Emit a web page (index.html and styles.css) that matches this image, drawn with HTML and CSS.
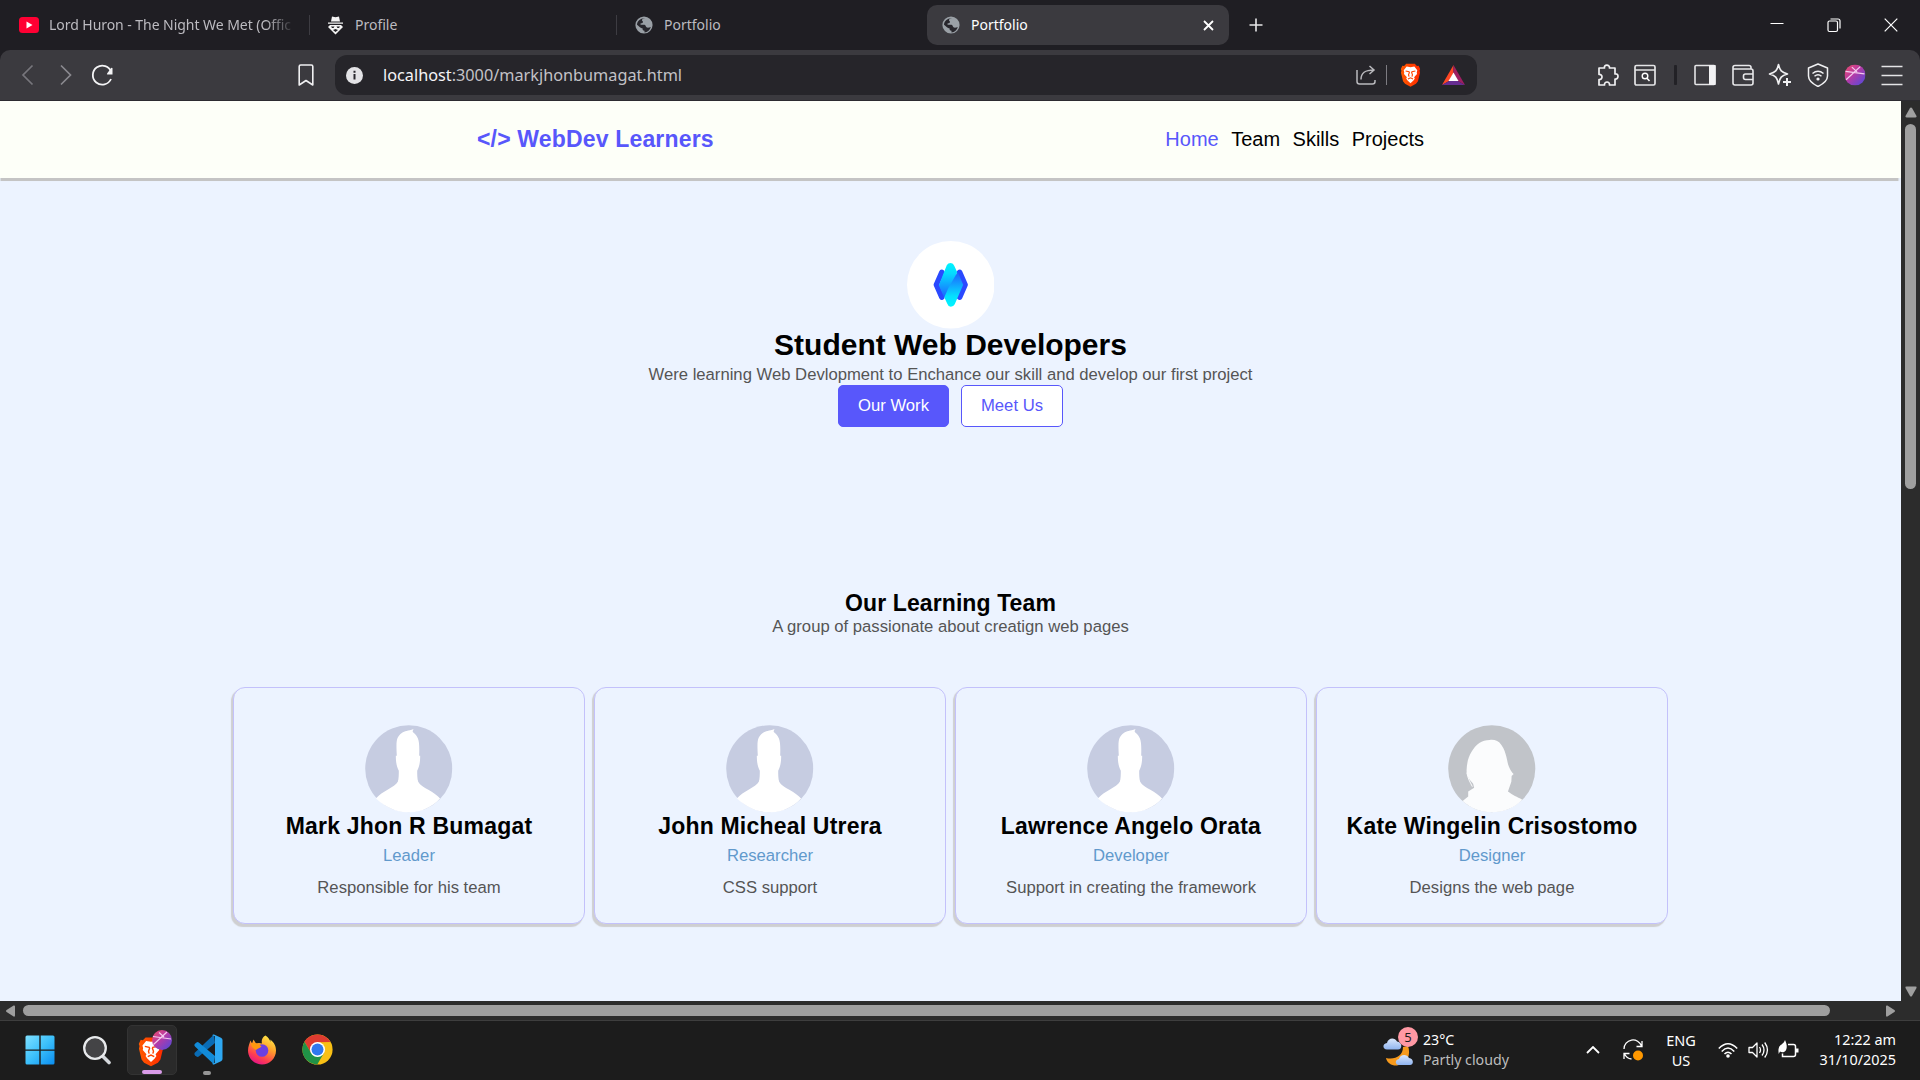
FILE: index.html
```html
<!DOCTYPE html>
<html lang="en">
<head>
<meta charset="utf-8">
<title>Portfolio</title>
<link rel="stylesheet" href="styles.css">
</head>
<body>
<svg class="defs" width="0" height="0" aria-hidden="true">
  <defs>
    <linearGradient id="ball" x1="0" y1="0" x2="1" y2="1"><stop offset="0" stop-color="#ef4d67"/><stop offset=".45" stop-color="#b63aa6"/><stop offset="1" stop-color="#4a4be0"/></linearGradient>
    <linearGradient id="lion" x1="0" y1="0" x2="1" y2="0"><stop offset="0" stop-color="#ff5a00"/><stop offset="1" stop-color="#ff2a00"/></linearGradient>
    <linearGradient id="win" x1="0" y1="0" x2="1" y2="1"><stop offset="0" stop-color="#7fe0ff"/><stop offset=".5" stop-color="#3cc0fb"/><stop offset="1" stop-color="#0a8df0"/></linearGradient>
    <linearGradient id="cyan" x1="0" y1="0" x2="0" y2="1"><stop offset="0" stop-color="#00f6ff"/><stop offset=".3" stop-color="#05d9ff"/><stop offset="1" stop-color="#1f5bff"/></linearGradient>
    <linearGradient id="cyan2" x1="0" y1="1" x2="0" y2="0"><stop offset="0" stop-color="#00f6ff"/><stop offset=".3" stop-color="#05e0ff"/><stop offset="1" stop-color="#1f5bff"/></linearGradient>
    <linearGradient id="fox" x1=".8" y1="0" x2=".3" y2="1"><stop offset="0" stop-color="#fff04a"/><stop offset=".4" stop-color="#ffa02a"/><stop offset=".75" stop-color="#ff3f4f"/><stop offset="1" stop-color="#e3128b"/></linearGradient>
    <linearGradient id="cloud" x1="0" y1="0" x2="0" y2="1"><stop offset="0" stop-color="#dbe8fc"/><stop offset="1" stop-color="#8fb4f0"/></linearGradient>
    <symbol id="globe" viewBox="0 0 18 18"><circle cx="9" cy="9" r="8.600" fill="#9aa0a6"/><path d="M10 2.200C7 2.500 6.500 4 7.500 5c1 .9.500 2-1 2.200-1.500.2-1.500 1.500-.3 1.600h3c1.600 0 1.300 1.700 2.300 2.500 1 .7 2.800.3 4.300-.4-.7 3-3.200 5.300-6.300 5.500v-1.600c-1.700-.2-2.100-1-1.800-2.300C5.600 12 3.500 10 2 8.700 2 5 5.500 1.900 10 2.200z" fill="#27262c"/></symbol>
    <symbol id="brave" viewBox="0 0 24 28"><path d="M7 1h10l2.500 2.500 2-.3L23.300 7l-.7 2 .5 2.500-2.400 9.800-2.300 3L12 27.700 5.600 24.300l-2.300-3L.9 11.500 1.400 9 .7 7l1.800-3.800 2 .3z" fill="url(#lion)"/><path d="M12 5l4.500-.8 3.400 4.300-.6 2.500.3 1.700-3.400 3.900.8 1.600-1.600 2.300L12 23.600l-3.400-3.100L7 18.200l.8-1.600-3.400-3.900.3-1.700-.6-2.500 3.400-4.300z" fill="#fff"/><path d="M6.300 9.300l4 .8.400 1-1 2.600.6 2.300M17.700 9.300l-4 .8-.4 1 1 2.600-.6 2.300M9 18.700l3-1.400 3 1.400" fill="none" stroke="#ff4500" stroke-width="1.300"/></symbol>
    <symbol id="orb" viewBox="0 0 20 20"><circle cx="10" cy="10" r="10" fill="url(#ball)"/><path d="M1 6.500L19 9M1.500 14.500L15 2M7 2.500l5 4.500" stroke="#f3c9ee" stroke-width="1.200" fill="none"/></symbol>
    <symbol id="man" viewBox="0 0 88 88"><circle cx="44" cy="44" r="43.800" fill="#c6cce1"/><path d="M11 74c6-8 19-11 22-17 1-3 1-8 1-11-2-4-3-8-3-15l1 0c-1-17 0-19 5-23 3-2 6-2 12-4-1 1-1 2-1 3 6 5 7 8 6.500 24l1 0c0 7-1 11-3 15 0 3 0 8 1 11 3 6 17 10 22 17C67 83 56 88 44 88S21 83 11 74z" fill="#fff"/></symbol>
  </defs>
</svg>
<div class="screen">
  <div class="tabstrip">
    <div class="tab">
      <svg width="20" height="18" viewBox="0 0 20 18"><rect y="1" width="20" height="16" rx="3.500" fill="#ff0033"/><path d="M7.500 5.500v7L13.500 9z" fill="#fff"/></svg>
      <span class="tab-name fade">Lord Huron - The Night We Met (Offic</span>
    </div>
    <div class="tab tab-second">
      <svg width="17" height="19" viewBox="0 0 17 19"><path d="M5 .5l3.500.8L12 .5l1 5H4zM1 6.500h15v1.300H1zM3 9h11l2 2-4 4-3.500 3.500L5 15l-4-4z" fill="#f4f4f4"/><path d="M4 10.500h3.500L6.500 12H5zM9.500 10.500H13L12 12h-1.500zM6 14l2.500-1 2.500 1-2.500 2z" fill="#202024"/></svg>
      <span class="tab-name">Profile</span>
    </div>
    <div class="tab tab-third">
      <svg width="18" height="18"><use href="#globe"/></svg>
      <span class="tab-name">Portfolio</span>
    </div>
    <div class="tab active">
      <svg width="18" height="18"><use href="#globe"/></svg>
      <span class="tab-name">Portfolio</span>
      <svg class="tab-close" width="11" height="11" viewBox="0 0 11 11"><path d="M1 1l9 9M10 1l-9 9" stroke="#fff" stroke-width="1.800"/></svg>
    </div>
    <svg class="plus" width="14" height="14" viewBox="0 0 14 14"><path d="M7 .5v13M.5 7h13" stroke="#e6e6e8" stroke-width="1.600"/></svg>
    <div class="window-buttons">
      <svg width="14" height="16" viewBox="0 0 14 16"><path d="M.5 6.500h13" stroke="#fff" stroke-width="1"/></svg>
      <svg width="14" height="16" viewBox="0 0 14 16"><rect x="1" y="4" width="9.500" height="10.500" rx="1.500" fill="none" stroke="#fff" stroke-width="1.200"/><path d="M3.500 2h7.500q2 0 2 2v7.500" fill="none" stroke="#fff" stroke-width="1.200"/></svg>
      <svg width="14" height="16" viewBox="0 0 14 16"><path d="M.7 1.700l12.600 12.600M13.300 1.700L.7 14.300" stroke="#fff" stroke-width="1.200"/></svg>
    </div>
  </div>
  <div class="toolbar-back">
  <div class="toolbar">
    <div class="nav-buttons">
      <svg width="37" height="24" viewBox="0 0 37 24"><path d="M22.500 2.500L13 12l9.500 9.500" fill="none" stroke="#77767c" stroke-width="1.700"/></svg>
      <svg width="37" height="24" viewBox="0 0 37 24"><path d="M14 2.500l9.500 9.500-9.500 9.500" fill="none" stroke="#8a898f" stroke-width="1.700"/></svg>
      <svg width="37" height="24" viewBox="0 0 37 24"><path d="M27 16a9.500 9.500 0 1 1 .3-7" fill="none" stroke="#f4f4f6" stroke-width="1.800"/><path d="M28.500 5.500v6h-5q-1 0-.4-1l4-5.500q1.200-.8 1.400.500z" fill="#f4f4f6"/></svg>
    </div>
    <svg class="bookmark" width="16" height="23" viewBox="0 0 16 23"><path d="M1.200 2.500q0-1.500 1.500-1.500h10.600q1.500 0 1.500 1.500V21l-6.800-4.500L1.200 21z" fill="none" stroke="#f0f0f2" stroke-width="1.600" stroke-linejoin="round"/></svg>
    <div class="address">
      <svg width="17" height="17" viewBox="0 0 17 17"><circle cx="8.500" cy="8.500" r="8.500" fill="#e3e3e6"/><path d="M8.500 7v5.500M8.500 3.800v2" stroke="#28272c" stroke-width="2"/></svg>
      <span class="url"><b>localhost</b>:3000/markjhonbumagat.html</span>
      <div class="address-tools">
        <svg width="20" height="20" viewBox="0 0 20 20"><path d="M1 5v11.500Q1 19 3.500 19h13q2.500 0 2.500-2.500V15M5 14.500c0-7 4-9.500 13-9.500M13.500 1l4.500 4-4.500 4" fill="none" stroke="#b9b9bd" stroke-width="1.500"/></svg>
        <i class="sep-light"></i>
        <svg width="21" height="24" viewBox="0 0 24 28"><use href="#brave"/></svg>
        <svg class="bat" width="23" height="20" viewBox="0 0 23 20"><path d="M11.500 0L0 20l7-4 4.500-8z" fill="#ff4724"/><path d="M0 20h23l-7-4H7z" fill="#662d91"/><path d="M23 20L11.500 0v8l4.500 8z" fill="#9e1f63"/><path d="M11.500 7.500L6.500 16h10z" fill="#fff"/></svg>
      </div>
    </div>
    <div class="tools">
      <svg viewBox="0 0 24 24"><path d="M3 5h5.500c-1-3.800 5.500-3.800 5 0h5.500v6c4-1 4 5.500 0 5v6h-5.500c.6-4-5.500-4-5 0H3v-5.500c4 .3 4-5.500 0-5z" fill="none" stroke="#f0f0f2" stroke-width="1.700" stroke-linejoin="round"/></svg>
      <svg viewBox="0 0 24 24"><rect x="2" y="2.500" width="20" height="19.500" rx="1.500" fill="none" stroke="#e4e4e6" stroke-width="1.700"/><path d="M2 7h20" stroke="#e4e4e6" stroke-width="1.500"/><circle cx="12" cy="13" r="2.800" fill="none" stroke="#fff" stroke-width="1.400"/><path d="M14 15.200l2.500 2.800" stroke="#fff" stroke-width="1.500"/></svg>
      <i class="sep-dark"></i>
      <svg viewBox="0 0 24 24"><rect x="2" y="2.500" width="20" height="19" rx="1" fill="none" stroke="#e4e4e6" stroke-width="1.600"/><path d="M16 2h6.500v20H16z" fill="#f2f2f4"/></svg>
      <svg viewBox="0 0 24 24"><path d="M2 4.500q0-2 2-2h14q2 0 2 2v1.500H2.500M20 6q2 0 2 2v12q0 2-2 2H4q-2 0-2-2V4.500M22 11h-7.500q-2 0-2 2v1.500q0 2 2 2H22" fill="none" stroke="#e8e8ea" stroke-width="1.600"/></svg>
      <svg viewBox="0 0 24 24"><path d="M10.500 1.500c1.300 6 3 7.700 9 9.500-6 1.500-7.700 3.500-9 10-1.300-6.500-3-8.500-9-10 6-1.800 7.700-3.500 9-9.500z" fill="none" stroke="#f0f0f2" stroke-width="1.600" stroke-linejoin="round"/><path d="M19 14.500v9M14.500 19h9" stroke="#3b3a3f" stroke-width="4.500"/><path d="M19 15v8M15 19h8" stroke="#f0f0f2" stroke-width="2"/></svg>
      <svg viewBox="0 0 24 24"><path d="M12 1l9.500 4v8c0 5-4.500 8-9.500 10.500C7 21 2.500 18 2.500 13V5z" fill="none" stroke="#f0f0f2" stroke-width="1.500" stroke-linejoin="round"/><path d="M6.500 10.500q5.500-4.500 11 0M8.500 13.300q3.500-3 7 0" fill="none" stroke="#f0f0f2" stroke-width="1.500"/><circle cx="12" cy="16" r="1.600" fill="#f0f0f2"/></svg>
      <svg viewBox="0 0 24 24"><use href="#orb" x="1.500" y="1.500" width="21" height="21"/></svg>
      <svg viewBox="0 0 24 24"><path d="M1.500 3.500h21M1.500 12.500h21M1.500 21.500h21" stroke="#e4e4e6" stroke-width="1.600"/></svg>
    </div>
  </div>
  </div>

  <div class="viewport">
    <main class="page">
      <header class="site-header">
        <div class="brand">&lt;/&gt; WebDev Learners</div>
        <nav class="links"><a class="current">Home</a><a>Team</a><a>Skills</a><a>Projects</a></nav>
      </header>
      <section class="hero">
        <svg class="avatar" viewBox="0 0 88 88"><circle cx="44" cy="44" r="44" fill="#fff"/><path d="M35 31.500L29.500 44 35 56.500M53 31.500L58.500 44 53 56.500" fill="none" stroke="#2a49ff" stroke-width="5.500" stroke-linecap="round" stroke-linejoin="round"/><path d="M44 22q2.500 0 3.500 3l3 6.500-9 27-4.500-2.500-5-11.500 8-20q1.200-2.500 4-2.500z" fill="url(#cyan)"/><path d="M44 66q-2.500 0-3.500-3l-3-6.500 4-9L51 31l5.500 13-8.500 19.500Q46.800 66 44 66z" fill="url(#cyan2)"/></svg>
        <h1>Student Web Developers</h1>
        <p>Were learning Web Devlopment to Enchance our skill and develop our first project</p>
        <div class="actions"><a class="btn solid">Our Work</a><a class="btn outline">Meet Us</a></div>
      </section>
      <section class="team">
        <h2>Our Learning Team</h2>
        <p>A group of passionate about creatign web pages</p>
        <div class="cards">
          <article class="card"><svg class="avatar"><use href="#man"/></svg><h3>Mark Jhon R Bumagat</h3><div class="role">Leader</div><p>Responsible for his team</p></article>
          <article class="card"><svg class="avatar"><use href="#man"/></svg><h3>John Micheal Utrera</h3><div class="role">Researcher</div><p>CSS support</p></article>
          <article class="card"><svg class="avatar"><use href="#man"/></svg><h3>Lawrence Angelo Orata</h3><div class="role">Developer</div><p>Support in creating the framework</p></article>
          <article class="card"><svg class="avatar" viewBox="0 0 88 88"><circle cx="44" cy="44" r="43.800" fill="#c1c4c9"/><path d="M14.700 76.500l5.600-4.500v-5l6-4-1-4C21 54 18.500 51 18.700 45.300 19 38 20.500 32 23.700 27 28 19 34 15 42 15c5-.5 9 1 11.700 5 3 4 4 8 5 12s1.300 7 2.600 10 3 6 4.700 7.300l-2 2-.3 5.700-3.400 10c5 4 9 5 14.400 8.300C67 83.500 56 87.800 44 87.800s-21-4-29.300-11.300z" fill="#fbfcfd"/><path d="M19 48c1 6 3 9 5.500 14" stroke="#fbfcfd" fill="none"/></svg><h3>Kate Wingelin Crisostomo</h3><div class="role">Designer</div><p>Designs the web page</p></article>
        </div>
      </section>
    </main>
    <div class="vscroll">
      <svg width="12" height="11" viewBox="0 0 12 11"><path d="M6 .5q.7 0 1 .6l4.500 8q.5 1.400-1 1.400h-9q-1.500 0-1-1.400l4.500-8q.3-.6 1-.6z" fill="#9f9f9f"/></svg>
      <div class="vthumb"></div>
      <svg width="12" height="11" viewBox="0 0 12 11"><path d="M6 10.500q-.7 0-1-.6L.5 1.900Q0 .5 1.500.5h9q1.500 0 1 1.400l-4.500 8q-.3.600-1 .6z" fill="#9f9f9f"/></svg>
    </div>
  </div>
  <div class="hscroll">
    <svg width="10" height="12" viewBox="0 0 10 12"><path d="M0 6q0-.7.600-1l7-4.500Q9 0 9 1.500v9Q9 12 7.600 11.500L.6 7Q0 6.700 0 6z" fill="#9f9f9f"/></svg>
    <div class="hthumb"></div>
    <svg class="arrow-right" width="10" height="12" viewBox="0 0 10 12"><path d="M10 6q0-.7-.6-1l-7-4.500Q1 0 1 1.500v9Q1 12 2.400 11.500L9.400 7q.6-.3.600-1z" fill="#9f9f9f"/></svg>
  </div>

  <footer class="taskbar">
    <div class="apps">
      <div class="app"><svg width="30" height="30" viewBox="0 0 30 30"><path d="M2 .5h12.300v14H.5V2Q.5.500 2 .5zM15.700.5H28q1.500 0 1.500 1.500v12.500H15.700zM.5 15.800h13.800v13.700H2Q.5 29.500.5 28zM15.700 15.800h13.800V28q0 1.500-1.500 1.500H15.700z" fill="url(#win)"/></svg></div>
      <div class="app"><svg width="30" height="30" viewBox="0 0 30 30"><path d="M19.500 20l7.500 7.500" stroke="#d4d8dc" stroke-width="3.600" stroke-linecap="round"/><circle cx="13" cy="13" r="10.800" fill="#444446" stroke="#e8eaec" stroke-width="2.300"/></svg></div>
      <div class="app selected"><svg class="brave-app" width="36" height="38" viewBox="0 0 36 38"><use href="#brave" x="2" y="7" width="26" height="31"/><use href="#orb" x="16" y="1" width="20" height="20"/></svg><i class="running"></i></div>
      <div class="app"><svg width="31" height="31" viewBox="0 0 31 31"><path d="M22 .5L3 18.500q-1.500 1.500 0 2.800l1.500 1.300q1 .8 2.300 0L23 9z" fill="#0a6cb5"/><path d="M22 30.500L3 12.500q-1.500-1.500 0-2.800l1.500-1.300q1-.8 2.300 0L23 22z" fill="#128bd8"/><path d="M22 .5l7 3.200Q30.500 4.500 30.500 6v19q0 1.500-1.500 2.300l-7 3.200q-1 .3-2-.7l3-1V2.200l-3-1q1-1 2-.7z" fill="#2ea8f2"/></svg><i class="idle"></i></div>
      <div class="app"><svg width="30" height="30" viewBox="0 0 30 30"><path d="M18.500.5c3 2 4.500 4.500 5 6.500 0-1 0-1.500-.3-2.500C27.500 7.500 29 11.500 29 15.500 29 23.500 22.500 29.500 15 29.500S1 23.500 1 15.500c0-4 1.500-7 2.500-10l1.500 3 1.500-4 2.500 4q3-1 6 0c-1-3 .5-6.500 3.500-8z" fill="url(#fox)"/><circle cx="15" cy="15.500" r="6.300" fill="#6d3fe0"/><path d="M4 8c4 0 7 0 10.500 3.500-1.500 2-4 1.500-5.500 3.500C6.500 13 4 12 4 8z" fill="#ff980e"/></svg></div>
      <div class="app"><svg width="31" height="31" viewBox="0 0 30 30"><circle cx="15" cy="15" r="14.600" fill="#f9c015"/><path d="M2.400 7.500A14.600 14.600 0 0 1 27.600 7.700L15 8 8.700 18.500z" fill="#de3b30"/><path d="M2.400 7.500L9 18.600 15 22l-.5 7.600A14.600 14.600 0 0 1 2.400 7.500z" fill="#209247"/><path d="M14.800 29.600L21.500 18l-6 4-3.500-.5z" fill="#209247"/><circle cx="15" cy="15" r="7.300" fill="#fff"/><circle cx="15" cy="15" r="5.800" fill="#2f78ee"/></svg></div>
    </div>
    <div class="tray">
      <div class="weather">
        <svg width="33" height="36" viewBox="0 0 33 36"><path d="M25 14c3 8 0 18-11 19.500C9 34 4 31 3 26c9 2 17-2 17-11z" fill="#f79a1c"/><path d="M4 17.500c-4.500 0-5-6 0-6.500 1-5.500 8-6 10-1.500 5 0 6 7.500 1 8z" fill="url(#cloud)"/><path d="M16 33c-4 0-4.500-5 0-6 1-5 8-5.500 10-1 5 .5 5 7 1 7z" fill="url(#cloud)"/></svg>
        <span class="badge">5</span>
        <div class="lines"><span>23°C</span><span class="dim">Partly cloudy</span></div>
      </div>
      <svg class="chevron" width="14" height="8" viewBox="0 0 14 8"><path d="M1 7l6-6 6 6" fill="none" stroke="#fff" stroke-width="1.800"/></svg>
      <svg class="sync" width="22" height="22" viewBox="0 0 22 22"><path d="M2 10A9 9 0 0 1 19.500 7M20 2v5.500h-5.500M2 20v-5.500h5.500M2.500 15a9 9 0 0 0 7 5" fill="none" stroke="#fff" stroke-width="1.300"/><circle cx="16" cy="16.500" r="5" fill="#ff9800"/></svg>
      <div class="lines lang"><span>ENG</span><span>US</span></div>
      <div class="status">
        <svg width="20" height="18" viewBox="0 0 20 18"><path d="M.8 7.500q9.200-9.500 18.400 0M3.700 10.400q6.300-6.600 12.600 0M6.500 13q3.500-3.600 7 0" fill="none" stroke="#fff" stroke-width="1.500"/><circle cx="10" cy="15" r="1.800" fill="#fff"/></svg>
        <svg width="21" height="18" viewBox="0 0 21 18"><path d="M1 6.500h3.500L9 2v14l-4.500-4.500H1z" fill="none" stroke="#fff" stroke-width="1.300" stroke-linejoin="round"/><path d="M11.500 6q2 3 0 6M14 3.500q4 5.500 0 11M16.700 1.500q5.500 7.500 0 15" fill="none" stroke="#fff" stroke-width="1.300"/></svg>
        <svg width="21" height="20" viewBox="0 0 21 20"><path d="M10 4.500h5.500q2 0 2 2v8q0 2-2 2h-11v-3" fill="none" stroke="#fff" stroke-width="1.500"/><path d="M18 8.500h2.500v4H18z" fill="#fff"/><path d="M7 0c2.500 5 2.500 10.500-1 12-1.500.5-3 .3-4-.5l-1.300 2.500C.5 11 .2 10 .8 8 1.500 4.500 5.500 4.500 7 0z" fill="#fff"/></svg>
      </div>
      <div class="lines clock"><span>12:22 am</span><span>31/10/2025</span></div>
    </div>
  </footer>
</div>
</body>
</html>
```
FILE: styles.css
```css
* { box-sizing: border-box; }
body { margin: 0; background: #1c1c1c; font-family: "Noto Sans", sans-serif; }
h1, h2, h3, p { margin: 0; }
svg { display: block; flex: none; }
.defs { position: absolute; }
.screen { width: 1920px; height: 1080px; display: flex; flex-direction: column; overflow: hidden; }

/* browser tabs */
.tabstrip { height: 50px; flex: none; background: #1f1e23; display: flex; align-items: center; padding-left: 2px; }
.tab { width: 308px; height: 40px; display: flex; align-items: center; gap: 10px; padding-left: 17px; color: #bcbbc0; font-size: 14px; position: relative; }
.tab-second { width: 307px; gap: 11px; padding-left: 17px; }
.tab-third { padding-left: 18px; gap: 11px; }
.tab-second::before, .tab-third::before { content: ""; position: absolute; left: -1px; top: 10px; width: 1px; height: 20px; background: #3d3c42; }
.tab-name { white-space: nowrap; padding-bottom: 2px; }
.fade { width: 252px; letter-spacing: -0.05px; mask-image: linear-gradient(to right, #000 86%, transparent 98%); }
.tab.active { width: 302px; margin-left: 2px; padding: 0 15px 0 15px; background: #3b3a3f; border-radius: 10px; color: #fff; gap: 11px; }
.tab-close { margin-left: auto; }
.plus { margin-left: 20px; }
.window-buttons { margin-left: auto; display: flex; gap: 43px; padding-right: 22px; }

/* toolbar */
.toolbar-back { background: #1f1e23; flex: none; }
.toolbar { height: 51px; background: #3b3a3f; border-radius: 10px 10px 0 0; border-bottom: 1px solid #2c2b30; display: flex; align-items: center; padding-left: 10px; }
.nav-buttons { display: flex; width: 288px; }
.bookmark { margin-right: 21px; }
.address { width: 1142px; height: 40px; border-radius: 12px; background: #26252a; display: flex; align-items: center; padding-left: 11px; }
.url { margin-left: 20px; font-size: 16.250px; color: #c3c2c7; line-height: 24px; white-space: nowrap; }
.url b { font-weight: 400; color: #f4f4f6; }
.address-tools { margin-left: auto; display: flex; align-items: center; gap: 10px; padding-right: 12.500px; }
.bat { margin-left: 11px; }
.sep-light { width: 1px; height: 20px; background: #7d7c82; margin-right: 3px; }
.tools { margin-left: auto; display: flex; align-items: center; padding-right: 9px; }
.tools svg { width: 24px; height: 24px; margin: 0 6.700px; }
.sep-dark { width: 3px; height: 20px; background: #222126; margin: 0 9.800px; border-radius: 1px; }

/* web page */
.viewport { height: 900px; flex: none; display: flex; }
.page { width: 1901px; background: #ecf3ff; font-family: "Liberation Sans", Arial, sans-serif; font-size: 16.667px; color: #555; text-align: center; }
.site-header { height: 77px; background: #fdfff8; box-shadow: -2px 2.500px 1px #c4c4c4; display: flex; align-items: center; justify-content: space-between; padding: 0 477px 0 477px; }
.brand { font-size: 23px; letter-spacing: 0.170px; font-weight: 700; color: #5857fb; white-space: nowrap; }
.links { display: flex; gap: 12.500px; font-size: 20px; color: #000; }
.links .current { color: #5857fb; }
.hero { height: 412px; padding-top: 63px; display: flex; flex-direction: column; align-items: center; }
.avatar { width: 87.500px; height: 87.500px; }
.hero h1 { color: #000; font-size: 30px; line-height: 31px; white-space: nowrap; }
.hero p { line-height: 20px; margin-top: 5.500px; white-space: nowrap; }
.actions { display: flex; gap: 12px; }
.btn { height: 42px; border-radius: 5px; border: 1px solid #5857fb; display: flex; align-items: center; justify-content: center; }
.solid { width: 111px; background: #5857fb; color: #fff; }
.outline { width: 102px; background: #fff; color: #5857fb; }
.team { display: flex; flex-direction: column; align-items: center; }
.team h2 { color: #000; font-size: 23px; letter-spacing: 0.100px; line-height: 26px; }
.team > p { line-height: 20px; margin-top: 1px; }
.cards { display: flex; gap: 9px; margin-top: 50px; }
.card { width: 352px; height: 237px; border: 1px solid #c3c1fb; border-radius: 12px; box-shadow: -2px 2.500px 1px #cfcfd1; background: #ecf3ff; display: flex; flex-direction: column; align-items: center; padding-top: 37px; }
.card h3 { color: #000; font-size: 23px; letter-spacing: 0.200px; line-height: 26px; white-space: nowrap; }
.role { color: #6199cc; line-height: 20px; margin: 7.500px 0 12px; }
.card p { line-height: 20px; white-space: nowrap; }

/* scrollbars */
.vscroll { width: 19px; background: #2c2c2c; display: flex; flex-direction: column; align-items: center; padding: 6px 0 4px; }
.vthumb { width: 11px; height: 365px; margin: 6px 0 auto; border-radius: 6px; background: #9f9f9f; }
.hscroll { height: 19px; flex: none; background: #2c2c2c; display: flex; align-items: center; padding-left: 6px; }
.hthumb { width: 1807px; height: 11px; margin-left: 7px; border-radius: 6px; background: #9f9f9f; }
.arrow-right { margin-left: 55px; }

/* taskbar */
.taskbar { height: 60px; flex: none; background: #1c1c1c; border-top: 1px solid #3e3e3e; display: flex; justify-content: space-between; padding-bottom: 2px; }
.apps { display: flex; align-items: center; gap: 5px; padding-left: 15px; }
.app { width: 50px; height: 50px; display: flex; align-items: center; justify-content: center; position: relative; border-radius: 5px; }
.app:nth-child(2) { margin-left: 2px; }
.app.selected { background: #2a2a2a; border: 1px solid #333; }
.brave-app { margin: 0 0 4px 4px; }
.running, .idle { position: absolute; bottom: 0; height: 4px; border-radius: 2px; }
.running { width: 20px; background: #d99be8; }
.idle { width: 8px; background: #969696; }
.tray { display: flex; align-items: center; color: #fff; padding-right: 24px; }
.lines { display: flex; flex-direction: column; font-size: 14px; line-height: 20px; white-space: nowrap; }
.dim { color: #bdbdbd; }
.weather { display: flex; align-items: center; gap: 7px; position: relative; width: 203px; margin-right: -1px; left: 1px; }
.weather .lines { font-size: 14.200px; }
.badge { position: absolute; left: 15px; top: -3px; width: 20px; height: 20px; border-radius: 50%; background: #ff99a4; color: #1c1c1c; font-size: 13px; line-height: 20px; text-align: center; }
.chevron { margin-left: 2px; }
.sync { margin-left: 22px; }
.lang { width: 36px; margin-left: 19px; align-items: center; font-size: 14.500px; }
.status { display: flex; align-items: center; gap: 9.500px; margin-left: 19px; }
.clock { width: 97px; align-items: flex-end; font-size: 14.400px; }
```
